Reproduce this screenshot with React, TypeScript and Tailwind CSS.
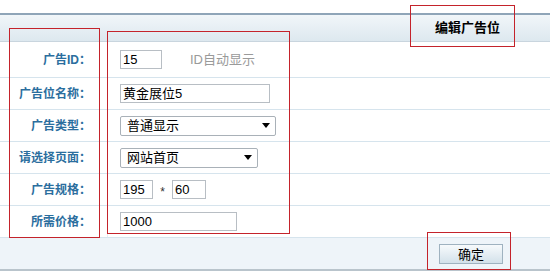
import { ReactNode } from "react";

const font = { fontFamily: '"Liberation Sans", "Noto Sans CJK SC", sans-serif' };

function Row(props: { label: string; tall?: boolean; children: ReactNode }) {
  return (
    <div
      className={`grid grid-cols-[108px_1fr] border-b border-[#d6e4ed] ${
        props.tall ? "h-[36px]" : "h-[32px]"
      }`}
    >
      <div className="flex items-center justify-end pr-[16px] border-r border-[#e6eef3] text-[12px] font-bold text-[#2b6e9e]">
        {props.label}
      </div>
      <div className="flex items-center pl-[12px]">{props.children}</div>
    </div>
  );
}

function Select(props: { value: string; width: string }) {
  return (
    <div
      className={`${props.width} h-[20px] flex items-center justify-between border border-[#a9b1b8] rounded-[2px] bg-white pl-[6px] pr-[5px] text-[13px] text-black`}
    >
      <span>{props.value}</span>
      <span className="w-0 h-0 border-l-[4px] border-r-[4px] border-t-[5px] border-l-transparent border-r-transparent border-t-black" />
    </div>
  );
}

export default function App() {
  const input = "h-[19px] border border-[#b8bec4] bg-white px-[2px] text-[13px] text-black leading-[17px]";
  return (
    <div className="relative w-[550px] h-[274px] bg-white overflow-hidden" style={font}>
      <div className="h-[13px]" />
      <div className="h-[29px] border-t-2 border-b border-t-[#8fa5b8] border-b-[#c9d5de] bg-gradient-to-b from-[#f1f6f9] to-[#dde8ef] flex items-center justify-end pr-[50px]">
        <span className="text-[13px] font-bold text-black">编辑广告位</span>
      </div>

      <Row label="广告ID：" tall>
        <div className={`${input} w-[42px] bg-[#ececec]`}>15</div>
        <span className="ml-[28px] text-[13px] text-[#9a9a9a]">ID自动显示</span>
      </Row>
      <Row label="广告位名称：">
        <div className={`${input} w-[150px]`}>黄金展位5</div>
      </Row>
      <Row label="广告类型：">
        <Select value="普通显示" width="w-[156px]" />
      </Row>
      <Row label="请选择页面：">
        <Select value="网站首页" width="w-[138px]" />
      </Row>
      <Row label="广告规格：">
        <div className={`${input} w-[33px]`}>195</div>
        <span className="w-[19px] text-center text-[12px] text-[#333] mt-[4px]">*</span>
        <div className={`${input} w-[34px]`}>60</div>
      </Row>
      <Row label="所需价格：">
        <div className={`${input} w-[117px]`}>1000</div>
      </Row>

      <div className="h-[33px] bg-[#eef4f9] border-b-2 border-[#b9c4cc] flex items-center justify-end pr-[47px]">
        <button className="w-[64px] h-[20px] border border-[#9fb2c0] bg-gradient-to-b from-[#f7fafc] to-[#d3e1ea] text-[13px] text-black">
          确定
        </button>
      </div>

      <div className="absolute left-[410px] top-[5px] w-[105px] h-[42px] border border-[#c4232b]" />
      <div className="absolute left-[9px] top-[28px] w-[91px] h-[210px] border border-[#c4232b]" />
      <div className="absolute left-[107px] top-[31px] w-[183px] h-[203px] border border-[#c4232b]" />
      <div className="absolute left-[427px] top-[232px] w-[84px] h-[38px] border border-[#c4232b]" />
    </div>
  );
}
